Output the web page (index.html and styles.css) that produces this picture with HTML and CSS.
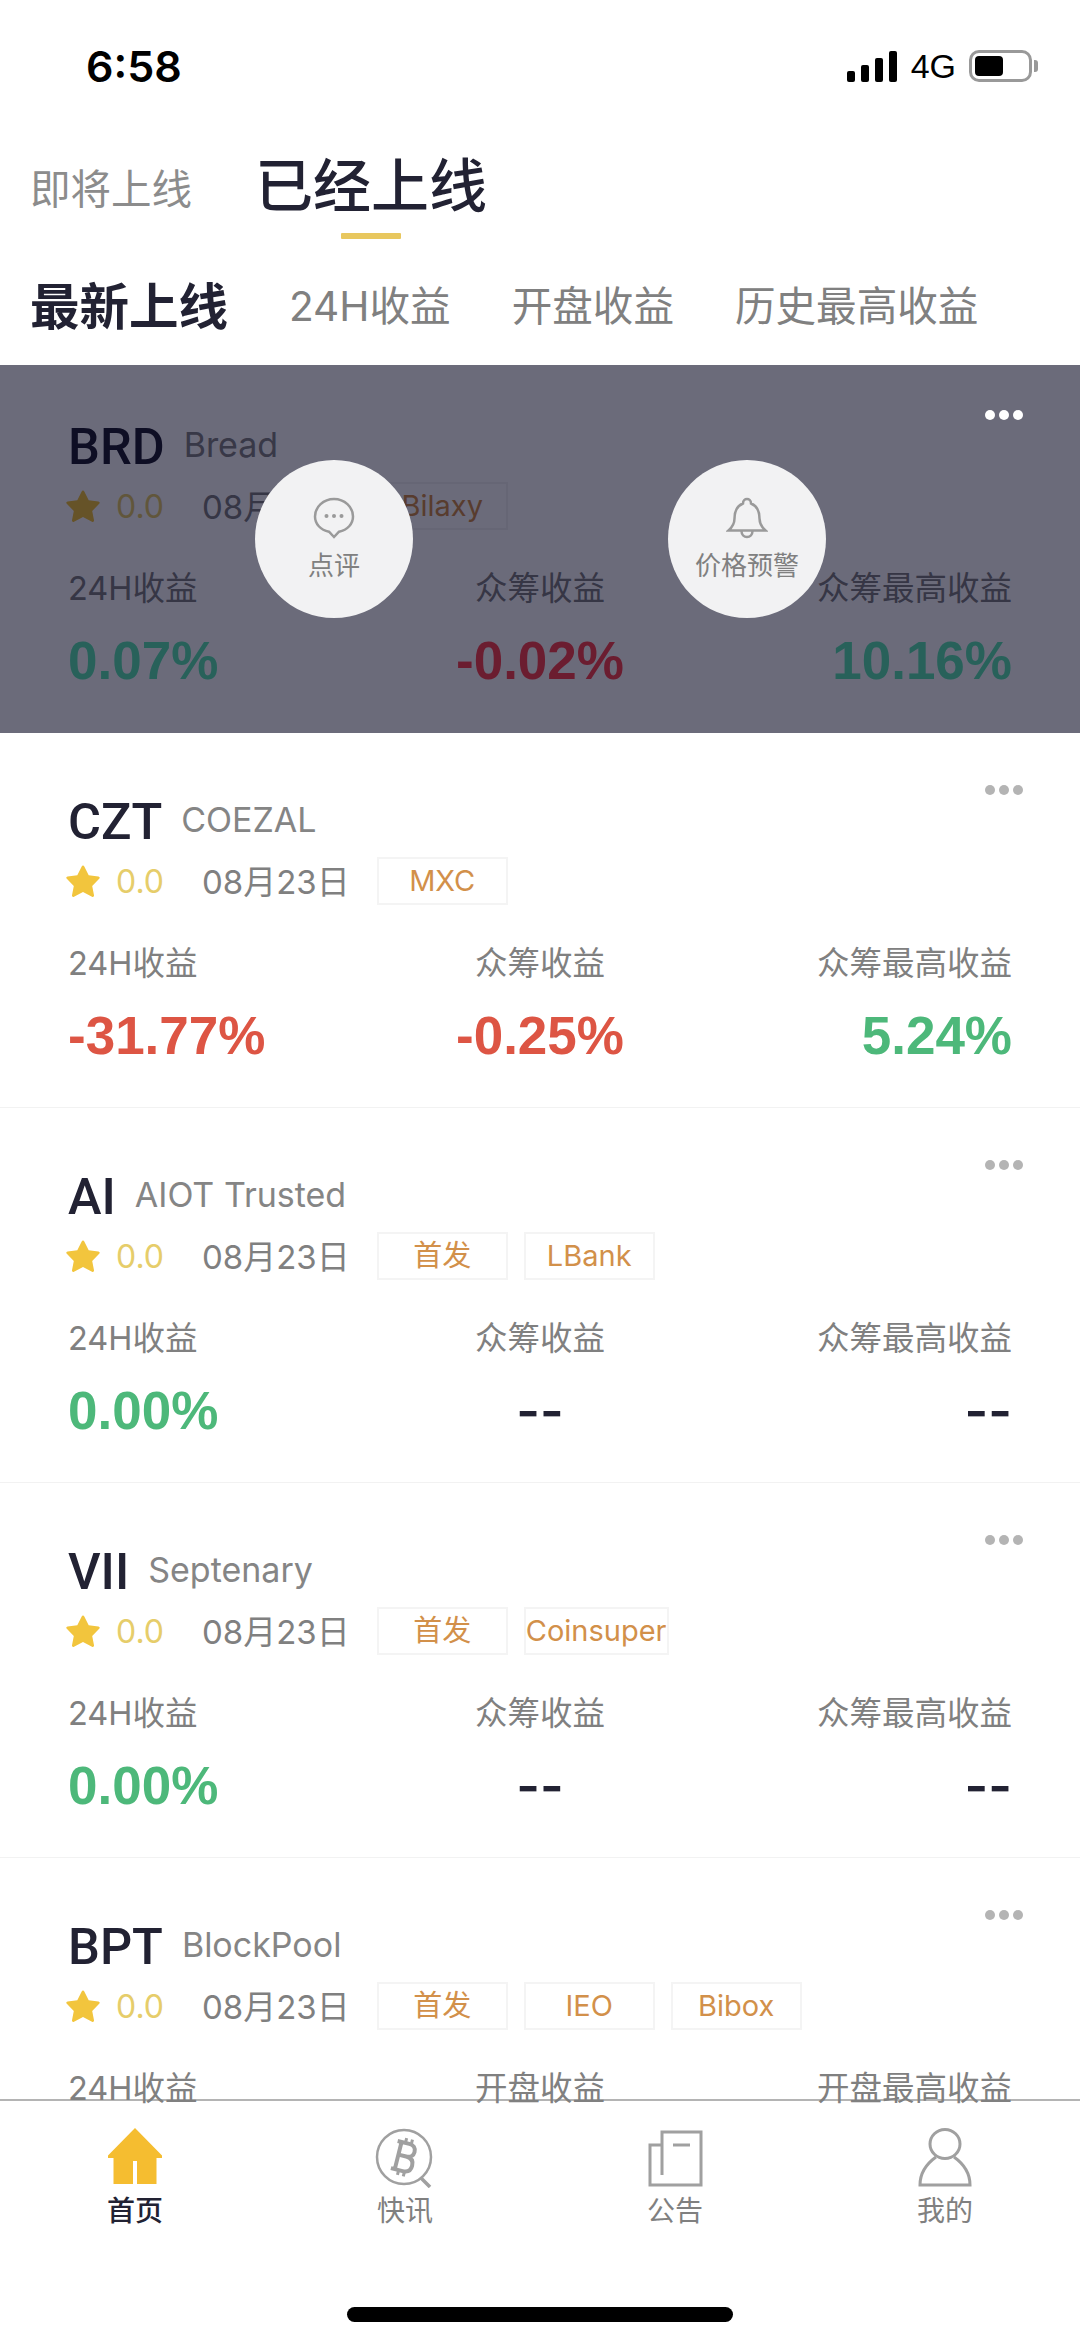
FILE: index.html
```html
<!DOCTYPE html>
<html lang="zh-CN">
<head>
    <meta charset="UTF-8">
    <meta name="viewport" content="width=device-width, initial-scale=1.0">
    <title>已经上线</title>
    <link rel="stylesheet" href="styles.css">
</head>
<body>
<svg class="sprite" width="0" height="0">
    <symbol id="star" viewBox="0 0 34 32">
        <path d="M17 .5c.6 0 1 .3 1.300 1l4.400 8.700 9.700 1.300c1.300.2 1.700 1.400.8 2.300l-7 7.200 1.800 9.200c.2 1.300-.8 2.100-2 1.500L17 27l-9 4.700c-1.200.6-2.200-.2-2-1.500l1.800-9.200-7-7.200c-.9-.9-.5-2.100.8-2.300l9.700-1.300 4.400-8.700c.3-.7.700-1 1.300-1z"/>
    </symbol>
</svg>

<div class="page">
    <div class="status-bar">
        <span class="time">6:58</span>
        <div class="status-right">
            <div class="signal"><i class="b1"></i><i class="b2"></i><i class="b3"></i><i class="b4"></i></div>
            <span class="network">4G</span>
            <div class="battery"><div class="battery-fill"></div></div>
            <div class="battery-nub"></div>
        </div>
    </div>

    <div class="main-tabs">
        <span class="main-tab">即将上线</span>
        <div class="main-tab active">已经上线<span class="underline"></span></div>
    </div>

    <div class="sub-tabs">
        <span class="sub-tab active">最新上线</span>
        <span class="sub-tab">24H收益</span>
        <span class="sub-tab">开盘收益</span>
        <span class="sub-tab">历史最高收益</span>
    </div>

    <div class="list">
        <div class="card masked">
            <div class="dots"><i></i><i></i><i></i></div>
            <div class="name-row"><span class="symbol">BRD</span><span class="full-name">Bread</span></div>
            <div class="meta-row">
                <svg class="star"><use href="#star"/></svg>
                <span class="rating">0.0</span>
                <span class="date">08月23日</span>
                <span class="tag">Bilaxy</span>
            </div>
            <div class="stats">
                <span class="label">24H收益</span><span class="label">众筹收益</span><span class="label">众筹最高收益</span>
                <span class="value up">0.07%</span><span class="value down">-0.02%</span><span class="value up">10.16%</span>
            </div>
            <div class="overlay">
                <div class="circle">
                    <svg class="circle-icon" width="42" height="42" viewBox="0 0 42 42" fill="none" stroke="#9a9a9a" stroke-width="2.500">
                        <path d="M21 40l-5-5.300C7.500 33 2 27 2 19.500 2 10 10.500 2 21 2s19 8 19 17.500c0 7.500-5.500 13.500-14 15.200z"/>
                        <circle cx="13.500" cy="19" r="2" fill="#9a9a9a" stroke="none"/>
                        <circle cx="21" cy="19" r="2" fill="#9a9a9a" stroke="none"/>
                        <circle cx="28.500" cy="19" r="2" fill="#9a9a9a" stroke="none"/>
                    </svg>
                    <span class="circle-text">点评</span>
                </div>
                <div class="circle">
                    <svg class="circle-icon" width="42" height="42" viewBox="0 0 42 42" fill="none" stroke="#9a9a9a" stroke-width="2.500">
                        <path d="M2.500 33.500h37c-4-3.500-6-6.500-6-12 0-8-3.500-13-8.500-15 0-3-2-4.500-4-4.500s-4 1.500-4 4.500c-5 2-8.500 7-8.500 15 0 5.500-2 8.500-6 12z"/>
                        <path d="M15.500 34c0 3.500 2.500 6 5.500 6s5.500-2.500 5.500-6"/>
                    </svg>
                    <span class="circle-text">价格预警</span>
                </div>
            </div>
        </div>

        <div class="card">
            <div class="dots"><i></i><i></i><i></i></div>
            <div class="name-row"><span class="symbol">CZT</span><span class="full-name">COEZAL</span></div>
            <div class="meta-row">
                <svg class="star"><use href="#star"/></svg>
                <span class="rating">0.0</span>
                <span class="date">08月23日</span>
                <span class="tag">MXC</span>
            </div>
            <div class="stats">
                <span class="label">24H收益</span><span class="label">众筹收益</span><span class="label">众筹最高收益</span>
                <span class="value down">-31.77%</span><span class="value down">-0.25%</span><span class="value up">5.24%</span>
            </div>
        </div>

        <div class="card">
            <div class="dots"><i></i><i></i><i></i></div>
            <div class="name-row"><span class="symbol">AI</span><span class="full-name">AIOT Trusted</span></div>
            <div class="meta-row">
                <svg class="star"><use href="#star"/></svg>
                <span class="rating">0.0</span>
                <span class="date">08月23日</span>
                <span class="tag">首发</span>
                <span class="tag">LBank</span>
            </div>
            <div class="stats">
                <span class="label">24H收益</span><span class="label">众筹收益</span><span class="label">众筹最高收益</span>
                <span class="value up">0.00%</span><span class="value empty">--</span><span class="value empty">--</span>
            </div>
        </div>

        <div class="card">
            <div class="dots"><i></i><i></i><i></i></div>
            <div class="name-row"><span class="symbol">VII</span><span class="full-name">Septenary</span></div>
            <div class="meta-row">
                <svg class="star"><use href="#star"/></svg>
                <span class="rating">0.0</span>
                <span class="date">08月23日</span>
                <span class="tag">首发</span>
                <span class="tag">Coinsuper</span>
            </div>
            <div class="stats">
                <span class="label">24H收益</span><span class="label">众筹收益</span><span class="label">众筹最高收益</span>
                <span class="value up">0.00%</span><span class="value empty">--</span><span class="value empty">--</span>
            </div>
        </div>

        <div class="card partial">
            <div class="dots"><i></i><i></i><i></i></div>
            <div class="name-row"><span class="symbol">BPT</span><span class="full-name">BlockPool</span></div>
            <div class="meta-row">
                <svg class="star"><use href="#star"/></svg>
                <span class="rating">0.0</span>
                <span class="date">08月23日</span>
                <span class="tag">首发</span>
                <span class="tag">IEO</span>
                <span class="tag">Bibox</span>
            </div>
            <div class="stats">
                <span class="label">24H收益</span><span class="label">开盘收益</span><span class="label">开盘最高收益</span>
            </div>
        </div>
    </div>

    <div class="bottom-nav">
        <div class="nav-items">
            <div class="nav-item active">
                <svg width="60" height="60" viewBox="0 0 60 60" fill="#f5bd30">
                    <path d="M30 0l27 27.500V30h-5.500v26H32V33h-4v23H8.500V30H3v-2.500z"/>
                </svg>
                <span>首页</span>
            </div>
            <div class="nav-item">
                <svg width="60" height="60" viewBox="0 0 60 60" fill="none" stroke="#a0a0a0" stroke-width="2.500">
                    <circle cx="29" cy="29" r="27"/>
                    <path d="M46 50l9 9" stroke-width="3.500"/>
                    <g transform="rotate(14 29 29)" stroke-width="4">
                        <path d="M23 15v28M19 15h12c4.500 0 7 2.500 7 6.500S35.500 28 31 28h-9m9 0c5 0 8 2.500 8 7.500S36 43 31 43H19"/>
                        <path d="M27 10v5M33 10v5M27 43v5M33 43v5" stroke-width="3"/>
                    </g>
                </svg>
                <span>快讯</span>
            </div>
            <div class="nav-item">
                <svg width="60" height="60" viewBox="0 0 60 60" fill="none" stroke="#a0a0a0" stroke-width="3">
                    <path d="M17 17H5v40h51V4H17v43"/>
                    <path d="M28 17h17"/>
                </svg>
                <span>公告</span>
            </div>
            <div class="nav-item">
                <svg width="60" height="60" viewBox="0 0 60 60" fill="none" stroke="#a0a0a0" stroke-width="3">
                    <ellipse cx="30" cy="16" rx="15" ry="14.500"/>
                    <path d="M21 29C14 34 5 42 5 57h50c0-15-9-23-16-28"/>
                </svg>
                <span>我的</span>
            </div>
        </div>
        <div class="home-indicator"></div>
    </div>
</div>
</body>
</html>
```

FILE: styles.css
```css
* {
    box-sizing: border-box;
}

body {
    margin: 0;
    background-color: #fff;
    font-family: Inter, "Noto Sans CJK SC", sans-serif;
    color: #222233;
}

.sprite {
    display: block;
}

.page {
    height: 2339px;
    display: flex;
    flex-direction: column;
    overflow: hidden;
}

/* status bar */
.status-bar {
    height: 156px;
    flex: none;
    display: flex;
    justify-content: space-between;
    padding: 46px 42px 0 86px;
}

.time {
    font-size: 43px;
    font-weight: 600;
    line-height: 40px;
    color: #000;
}

.status-right {
    display: flex;
    align-items: center;
    height: 40px;
}

.signal {
    display: flex;
    align-items: flex-end;
    gap: 6px;
    height: 31px;
    width: 50px;
}

.signal i {
    width: 8px;
    background-color: #000;
    border-radius: 2px;
}

.signal .b1 { height: 11px; }
.signal .b2 { height: 17px; }
.signal .b3 { height: 24px; }
.signal .b4 { height: 31px; }

.network {
    font-family: "Liberation Sans", sans-serif;
    font-size: 34px;
    margin-left: 14px;
    color: #000;
}

.battery {
    width: 63px;
    height: 32px;
    margin-left: 13px;
    border: 3px solid #999;
    border-radius: 10px;
    padding: 3px;
}

.battery-fill {
    width: 28px;
    height: 100%;
    background-color: #000;
    border-radius: 4px;
}

.battery-nub {
    width: 4px;
    height: 12px;
    margin-left: 2px;
    background-color: #999;
    border-radius: 0 3px 3px 0;
}

/* tabs */
.main-tabs {
    flex: none;
    display: flex;
    align-items: flex-start;
    gap: 63px;
    padding-left: 30px;
    height: 121px;
}

.main-tab {
    font-size: 40.500px;
    line-height: 60px;
    margin-top: 4px;
    color: #8c8c8c;
}

.main-tab.active {
    display: flex;
    flex-direction: column;
    align-items: center;
    margin-top: 0;
    font-size: 58px;
    font-weight: 500;
    color: #222233;
}

.underline {
    width: 60px;
    height: 6px;
    margin-top: 17px;
    background-color: #e8c75e;
    border-radius: 1px;
}

.sub-tabs {
    flex: none;
    height: 88px;
    display: flex;
    align-items: flex-start;
    padding-left: 30px;
    gap: 61px;
}

.sub-tab {
    font-size: 40.600px;
    line-height: 60px;
    color: #808080;
}

.sub-tab.active {
    font-size: 49.500px;
    font-weight: 700;
    color: #222233;
}

/* list */
.list {
    flex: 1;
    min-height: 0;
}

.card {
    position: relative;
    height: 375px;
    padding: 52px 68px 0;
    border-bottom: 1px solid #f2f2f2;
}

.card.masked {
    height: 368px;
    padding-top: 45px;
    border-bottom: none;
}

/* last card runs under the nav, only its top part shows */
.card.partial {
    height: 245px;
    border-bottom: none;
}

.dots {
    display: flex;
    justify-content: flex-end;
    gap: 4px;
    height: 10px;
    margin-right: -11px;
}

.dots i {
    width: 10px;
    height: 10px;
    border-radius: 50%;
    background-color: #b4b4b4;
}

.masked .dots {
    position: relative;
    z-index: 2;
}

.masked .dots i {
    background-color: #fff;
}

.name-row {
    display: flex;
    align-items: center;
    height: 50px;
    line-height: 52px;
}

.symbol {
    font-family: Roboto, sans-serif;
    font-size: 50.500px;
    font-weight: 500;
    margin: 3px 19px 0 0;
}

.full-name {
    font-size: 34px;
    color: #858585;
}

.meta-row {
    display: flex;
    align-items: center;
    height: 48px;
    margin-top: 12px;
}

.star {
    width: 34px;
    height: 32px;
    margin-left: -2px;
    fill: #f2c53d;
}

.rating {
    font-size: 32px;
    margin-left: 16px;
    color: #e6cd6a;
}

.date {
    font-size: 33px;
    margin: 0 27px 3px 38px;
    color: #808080;
}

.tag {
    min-width: 131px;
    height: 48px;
    margin-right: 16px;
    border: 2px solid #f4f4f4;
    font-size: 29px;
    line-height: 44px;
    text-align: center;
    color: #d2904a;
}

.stats {
    display: grid;
    grid-template-columns: repeat(3, 1fr);
    margin-top: 39px;
}

.label {
    font-size: 32.500px;
    line-height: 40px;
    color: #808080;
}

.value {
    font-family: "Liberation Sans", sans-serif;
    font-size: 53px;
    font-weight: 700;
    line-height: 60px;
    margin-top: 22px;
}

.value.empty {
    font-family: Inter, sans-serif;
    font-size: 51px;
    font-weight: 600;
}

.label:nth-child(3n + 2),
.value:nth-child(3n + 2) {
    text-align: center;
}

.label:nth-child(3n),
.value:nth-child(3n) {
    text-align: right;
}

.value.up {
    color: #4db87a;
}

.value.down {
    color: #dd5544;
}

.masked .value.up {
    color: #5fe8b4;
}

.masked .value.down {
    color: #ff4750;
}

/* action popup over the first card */
.overlay {
    position: absolute;
    inset: 0;
    display: flex;
    align-items: flex-start;
    gap: 255px;
    padding: 95px 0 0 255px;
    background-color: rgba(0, 0, 25, 0.58);
}

.circle {
    width: 158px;
    height: 158px;
    border-radius: 50%;
    background-color: #f2f2f3;
    display: flex;
    flex-direction: column;
    align-items: center;
    padding-top: 37px;
}

.circle-text {
    margin-top: 12px;
    font-size: 26px;
    line-height: 30px;
    color: #808080;
}

/* bottom navigation */
.bottom-nav {
    flex: none;
    height: 240px;
    border-top: 2px solid #b4b4b4;
}

.nav-items {
    display: grid;
    grid-template-columns: repeat(4, 270px);
    padding-top: 27px;
}

.nav-item {
    display: flex;
    flex-direction: column;
    align-items: center;
    font-size: 28px;
    line-height: 32px;
    color: #808080;
}

.nav-item span {
    margin-top: 7px;
}

.nav-item.active {
    color: #222233;
    font-weight: 500;
}

.home-indicator {
    width: 386px;
    height: 15px;
    margin: 80px auto 0;
    background-color: #000;
    border-radius: 8px;
}
```
